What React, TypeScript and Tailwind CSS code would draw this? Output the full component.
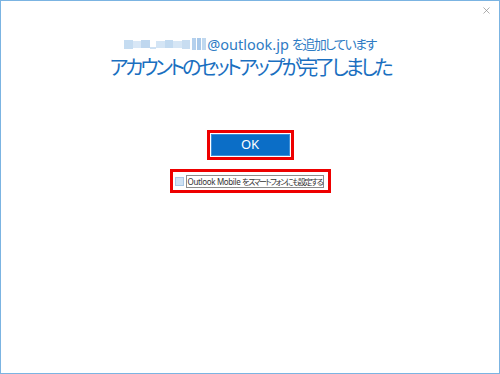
import { X } from "lucide-react";

const font = {
  fontFamily: '"Noto Sans", "Noto Sans CJK JP", sans-serif',
};

function BlurredName() {
  // pixelated (mosaic) user name
  return (
    <span className="mr-[1px] inline-flex h-[12px] items-center gap-0 align-[-1px]">
      <span className="h-[9px] w-[9px] bg-[#c5dcf1]" />
      <span className="h-[7px] w-[8px] bg-[#d8e7f6]" />
      <span className="h-[8px] w-[9px] bg-[#bfd7ef]" />
      <span className="mt-[8px] h-[2px] w-[6px] bg-[#cfe1f3]" />
      <span className="h-[7px] w-[9px] bg-[#d4e5f5]" />
      <span className="h-[8px] w-[8px] bg-[#c2daf0]" />
      <span className="h-[7px] w-[9px] bg-[#d6e6f5]" />
      <span className="h-[9px] w-[8px] bg-[#c8ddf1]" />
      <span className="ml-[2px] h-[12px] w-[4px] bg-[#b4d0ed]" />
      <span className="ml-[1px] h-[12px] w-[4px] bg-[#a9c9ea]" />
      <span className="ml-[1px] h-[12px] w-[4px] bg-[#c0d8ef]" />
    </span>
  );
}

export default function App() {
  return (
    <div
      className="relative h-[374px] w-[500px] border border-[#7bb4e2] bg-white"
      style={font}
    >
      <button className="absolute right-[7px] top-[4px] text-[#8a8a8a]">
        <X size={11} strokeWidth={1.5} />
      </button>

      <div className="flex flex-col items-center">
        <div className="mt-[33px] flex items-center text-[14.5px] leading-[20px] text-[#2f7cc4] [font-feature-settings:'palt']">
          <BlurredName />
          <span>@outlook.jp</span>
          <span className="ml-[3px] text-[13px] tracking-[-1.6px]">を追加しています</span>
        </div>

        <h1 className="mt-[0px] text-[20px] leading-[28px] tracking-[-3.2px] text-[#1a6fc0] [font-feature-settings:'palt']">
          アカウントのセットアップが完了しました
        </h1>

        <div className="mt-[48px] border-[3px] border-[#ee0000] p-[1px]">
          <button className="flex h-[22px] w-[79px] items-center justify-center border border-[#3f8fd6] bg-[#0b6ec7] text-[13px] text-white">
            OK
          </button>
        </div>

        <div className="mt-[9px] flex h-[24px] w-[161px] items-center border-[3px] border-[#ee0000] pl-[2px]">
          <span className="h-[9px] w-[9px] shrink-0 border border-[#a9c8e6] bg-[#cfe2f4]" />
          <span className="ml-[2px] whitespace-nowrap border border-[#8c8c8c] px-[1px] text-[8px] leading-[11px] text-[#333333] [font-feature-settings:'palt']">
            <span className="tracking-[-0.35px]">Outlook Mobile </span>
            <span className="tracking-[-1.5px]">をスマートフォンにも設定する</span>
          </span>
        </div>
      </div>
    </div>
  );
}
